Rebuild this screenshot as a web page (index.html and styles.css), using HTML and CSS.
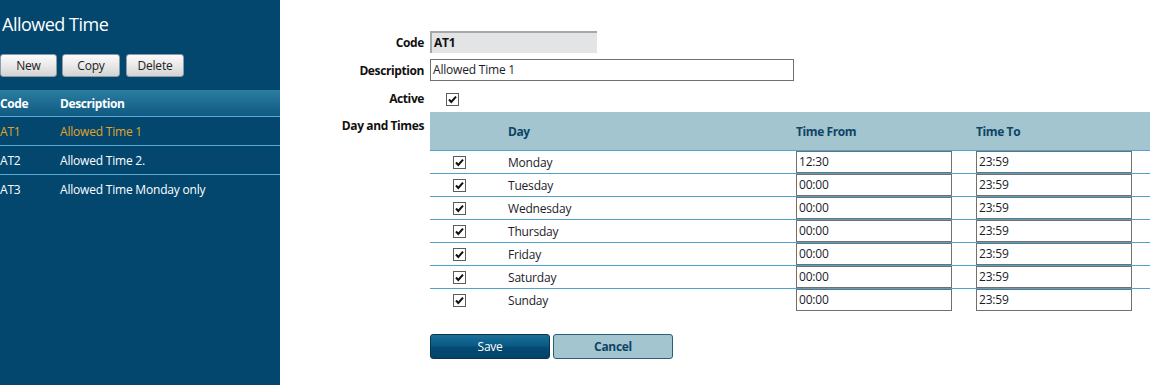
FILE: index.html
```html
<!DOCTYPE html>
<html lang="en">
<head>
<meta charset="utf-8">
<title>Allowed Time</title>
<link rel="stylesheet" href="styles.css">
</head>
<body>
<div class="app">
  <aside class="sidebar">
    <h1 class="title">Allowed Time</h1>
    <div class="toolbar">
      <button class="tbtn tbtn-new">New</button>
      <button class="tbtn">Copy</button>
      <button class="tbtn">Delete</button>
    </div>
    <div class="list">
      <div class="list-head">
        <span class="c-code">Code</span>
        <span class="c-desc">Description</span>
      </div>
      <div class="list-row selected">
        <span class="c-code">AT1</span>
        <span class="c-desc">Allowed Time 1</span>
      </div>
      <div class="list-row">
        <span class="c-code">AT2</span>
        <span class="c-desc">Allowed Time 2.</span>
      </div>
      <div class="list-row last">
        <span class="c-code">AT3</span>
        <span class="c-desc">Allowed Time Monday only</span>
      </div>
    </div>
  </aside>

  <main class="main">
    <div class="form">
      <label class="lbl lbl-code">Code</label>
      <div class="field field-code"><div class="code-box">AT1</div></div>

      <label class="lbl lbl-desc">Description</label>
      <div class="field field-desc"><div class="text-box desc-box">Allowed Time 1</div></div>

      <label class="lbl lbl-active">Active</label>
      <div class="field field-active">
        <span class="chk active-chk"><svg viewBox="0 0 13 13" width="13" height="13"><rect x="0.5" y="0.5" width="12" height="12" fill="#fff" stroke="#5c5c5c"/><path d="M3 6.5 L5.3 9 L10 3.6" fill="none" stroke="#111" stroke-width="2"/></svg></span>
      </div>

      <label class="lbl lbl-days">Day and Times</label>
      <div class="field field-days">
        <div class="grid">
          <div class="grid-head">
            <span></span>
            <span>Day</span>
            <span>Time From</span>
            <span>Time To</span>
          </div>
          <div class="grid-row">
            <span class="cell-chk"><span class="chk"><svg viewBox="0 0 13 13" width="13" height="13"><rect x="0.5" y="0.5" width="12" height="12" fill="#fff" stroke="#5c5c5c"/><path d="M3 6.5 L5.3 9 L10 3.6" fill="none" stroke="#111" stroke-width="2"/></svg></span></span>
            <span class="cell-day">Monday</span>
            <span class="cell-time"><span class="text-box time-box">12:30</span></span>
            <span class="cell-time"><span class="text-box time-box">23:59</span></span>
          </div>
          <div class="grid-row">
            <span class="cell-chk"><span class="chk"><svg viewBox="0 0 13 13" width="13" height="13"><rect x="0.5" y="0.5" width="12" height="12" fill="#fff" stroke="#5c5c5c"/><path d="M3 6.5 L5.3 9 L10 3.6" fill="none" stroke="#111" stroke-width="2"/></svg></span></span>
            <span class="cell-day">Tuesday</span>
            <span class="cell-time"><span class="text-box time-box">00:00</span></span>
            <span class="cell-time"><span class="text-box time-box">23:59</span></span>
          </div>
          <div class="grid-row">
            <span class="cell-chk"><span class="chk"><svg viewBox="0 0 13 13" width="13" height="13"><rect x="0.5" y="0.5" width="12" height="12" fill="#fff" stroke="#5c5c5c"/><path d="M3 6.5 L5.3 9 L10 3.6" fill="none" stroke="#111" stroke-width="2"/></svg></span></span>
            <span class="cell-day">Wednesday</span>
            <span class="cell-time"><span class="text-box time-box">00:00</span></span>
            <span class="cell-time"><span class="text-box time-box">23:59</span></span>
          </div>
          <div class="grid-row">
            <span class="cell-chk"><span class="chk"><svg viewBox="0 0 13 13" width="13" height="13"><rect x="0.5" y="0.5" width="12" height="12" fill="#fff" stroke="#5c5c5c"/><path d="M3 6.5 L5.3 9 L10 3.6" fill="none" stroke="#111" stroke-width="2"/></svg></span></span>
            <span class="cell-day">Thursday</span>
            <span class="cell-time"><span class="text-box time-box">00:00</span></span>
            <span class="cell-time"><span class="text-box time-box">23:59</span></span>
          </div>
          <div class="grid-row">
            <span class="cell-chk"><span class="chk"><svg viewBox="0 0 13 13" width="13" height="13"><rect x="0.5" y="0.5" width="12" height="12" fill="#fff" stroke="#5c5c5c"/><path d="M3 6.5 L5.3 9 L10 3.6" fill="none" stroke="#111" stroke-width="2"/></svg></span></span>
            <span class="cell-day">Friday</span>
            <span class="cell-time"><span class="text-box time-box">00:00</span></span>
            <span class="cell-time"><span class="text-box time-box">23:59</span></span>
          </div>
          <div class="grid-row">
            <span class="cell-chk"><span class="chk"><svg viewBox="0 0 13 13" width="13" height="13"><rect x="0.5" y="0.5" width="12" height="12" fill="#fff" stroke="#5c5c5c"/><path d="M3 6.5 L5.3 9 L10 3.6" fill="none" stroke="#111" stroke-width="2"/></svg></span></span>
            <span class="cell-day">Saturday</span>
            <span class="cell-time"><span class="text-box time-box">00:00</span></span>
            <span class="cell-time"><span class="text-box time-box">23:59</span></span>
          </div>
          <div class="grid-row last">
            <span class="cell-chk"><span class="chk"><svg viewBox="0 0 13 13" width="13" height="13"><rect x="0.5" y="0.5" width="12" height="12" fill="#fff" stroke="#5c5c5c"/><path d="M3 6.5 L5.3 9 L10 3.6" fill="none" stroke="#111" stroke-width="2"/></svg></span></span>
            <span class="cell-day">Sunday</span>
            <span class="cell-time"><span class="text-box time-box">00:00</span></span>
            <span class="cell-time"><span class="text-box time-box">23:59</span></span>
          </div>
        </div>
        <div class="actions">
          <button class="abtn save">Save</button>
          <button class="abtn cancel">Cancel</button>
        </div>
      </div>
    </div>
  </main>
</div>
</body>
</html>
```
FILE: styles.css
```css
* { box-sizing: border-box; }
html, body { margin: 0; padding: 0; height: 100%; }
body {
  font-family: "Open Sans", "Noto Sans", "DejaVu Sans", sans-serif;
  font-size: 12px;
  letter-spacing: -0.2px;
  color: #1c1c2a;
  background: #fff;
}
.app { display: flex; height: 385px; }

/* Sidebar */
.sidebar {
  width: 280px;
  flex: none;
  background: #03476f;
  color: #fff;
  padding-top: 11px;
}
.title {
  margin: 0 0 0 2px;
  font-size: 18px;
  font-weight: normal;
  line-height: 26px;
  height: 26px;
  letter-spacing: -0.5px;
}
.toolbar {
  display: flex;
  gap: 5px;
  margin-top: 17px;
  height: 23px;
}
.tbtn {
  width: 58px;
  height: 23px;
  padding: 0;
  font-family: inherit;
  font-size: 12px;
  letter-spacing: -0.2px;
  color: #222;
  border: 1px solid #8e9aa6;
  border-radius: 3px;
  background: linear-gradient(#fbfbfb, #e9e9e9 50%, #d4d4d4);
}
.tbtn-new { width: 57px; }
.tbtn + .tbtn + .tbtn { margin-left: 1px; }

.list { margin-top: 13px; }
.list-head {
  display: flex;
  align-items: center;
  height: 27px;
  font-weight: bold;
  letter-spacing: -0.4px;
  background: linear-gradient(#2b7da1, #0f5a82);
  border-bottom: 1px solid #5aaad3;
}
.list-row {
  display: flex;
  align-items: center;
  height: 29px;
  border-bottom: 1px solid #5aaad3;
}
.list-row.last { border-bottom: none; }
.list-row.selected { color: #e1a327; }
.c-code { width: 60px; flex: none; }
.c-desc { flex: 1; }

/* Main form */
.main { flex: 1; padding-top: 31px; }
.form {
  display: grid;
  grid-template-columns: 144px 720px;
  column-gap: 6px;
  align-items: center;
}
.lbl {
  text-align: right;
  font-weight: bold;
  letter-spacing: -0.4px;
  color: #111;
}
.field-code, .lbl-code { margin-bottom: 6px; }
.field-desc, .lbl-desc { margin-bottom: 6px; }
.field-active, .lbl-active { height: 24px; margin-bottom: 1px; }
.field-active { display: flex; align-items: center; }
.lbl-active { line-height: 24px; }
.lbl-days { align-self: start; padding-top: 5px; }

.code-box {
  width: 167px;
  height: 22px;
  line-height: 20px;
  padding-left: 2px;
  font-weight: bold;
  color: #111;
  background: #e3e4e5;
  border-top: 2px solid #a8a8a8;
  border-left: 2px solid #a8a8a8;
}
.text-box {
  display: block;
  height: 22px;
  line-height: 20px;
  padding-left: 2px;
  border: 1px solid #707070;
  background: #fff;
  color: #1c1c2a;
}
.desc-box { width: 364px; }
.chk { display: inline-flex; width: 13px; height: 13px; }
.chk svg { display: block; }
.active-chk { margin-left: 16px; }

/* Days grid */
.grid { width: 720px; }
.grid-head, .grid-row {
  display: grid;
  grid-template-columns: 78px 288px 180px 174px;
  align-items: center;
}
.grid-head {
  height: 39px;
  background: #a2c5cf;
  border-bottom: 1px solid #4fa3cc;
  font-weight: bold;
  letter-spacing: -0.4px;
  color: #0e4466;
}
.grid-row {
  height: 23px;
  border-bottom: 1px solid #4fa3cc;
}
.grid-row.last { border-bottom: none; height: 22px; }
.cell-chk { padding-left: 23px; display: flex; }
.time-box { width: 156px; }

.actions {
  display: flex;
  gap: 3px;
  margin-top: 23px;
}
.abtn {
  width: 120px;
  height: 25px;
  padding: 0;
  font-family: inherit;
  font-size: 12px;
  font-weight: bold;
  letter-spacing: -0.3px;
  border-radius: 3px;
}
.save {
  color: #fff;
  font-weight: normal;
  border: 1px solid #0c3450;
  background: linear-gradient(#1a6f99, #0b5a86 45%, #044a72 55%, #03446c);
}
.cancel {
  color: #0e4466;
  border: 1px solid #2c5d78;
  background: #a2c5cf;
}
```
